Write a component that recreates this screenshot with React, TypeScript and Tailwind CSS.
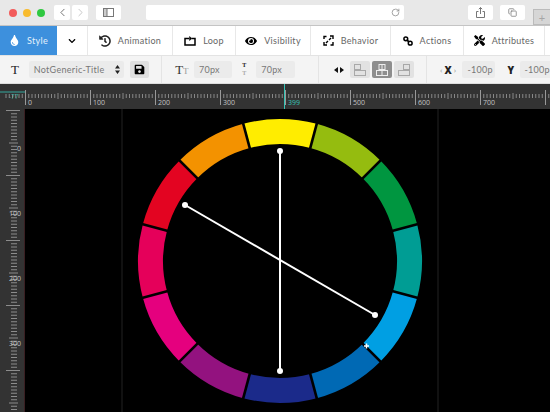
import React from "react";
import { ChevronLeft, ChevronRight, RotateCw, Copy } from "lucide-react";
import { FaTint, FaChevronDown, FaHistory, FaEye, FaTools, FaSave } from "react-icons/fa";

const colors = ["#ffed00","#95bc0f","#009640","#009d94","#009fe3","#0069b4","#1b2a8a","#93127f","#e5007e","#e5005a","#e30421","#f39200"];

function Wheel() {
  const cx = 255, cy = 152, R = 142, r = 117;
  const pt = (rad: number, deg: number) => {
    const a = (deg - 90) * Math.PI / 180;
    return [cx + rad * Math.cos(a), cy + rad * Math.sin(a)];
  };
  const p = (rad: number, deg: number) => pt(rad, deg).map((v) => v.toFixed(2)).join(" ");
  return (
    <svg width="525" height="303" viewBox="0 0 525 303" className="block">
      <line x1="97" y1="0" x2="97" y2="303" stroke="#222" />
      <line x1="413" y1="0" x2="413" y2="303" stroke="#222" />
      {colors.map((c, i) => {
        const a = i * 30 - 15, b = i * 30 + 15;
        return <path key={i} fill={c} d={`M${p(R, a)} A${R} ${R} 0 0 1 ${p(R, b)} L${p(r, b)} A${r} ${r} 0 0 0 ${p(r, a)} Z`} />;
      })}
      {colors.map((_, i) => {
        const a = i * 30 - 15;
        const [x1, y1] = pt(r - 2, a);
        const [x2, y2] = pt(R + 2, a);
        return <line key={i} x1={x1} y1={y1} x2={x2} y2={y2} stroke="#000" strokeWidth="2.6" />;
      })}
      <line x1="255" y1="42" x2="255" y2="262" stroke="#fff" strokeWidth="2" />
      <line x1="160" y1="96" x2="350" y2="206" stroke="#fff" strokeWidth="2" />
      <circle cx="255" cy="42" r="3" fill="#fff" />
      <circle cx="255" cy="262" r="3" fill="#fff" />
      <circle cx="160" cy="96" r="3" fill="#fff" />
      <circle cx="350" cy="206" r="3" fill="#fff" />
      <path d="M339 237h5M341.500 234.500v5" stroke="#fff" strokeWidth="1.500" />
    </svg>
  );
}

const rulerFont = "Open Sans, sans-serif";

function HRuler() {
  const ticks: React.ReactNode[] = [];
  for (let i = -6; i < 170; i++) {
    const x = 25.5 + i * 3.25;
    const major = i % 20 === 0;
    const mid = i % 10 === 0;
    ticks.push(<line key={i} x1={x} x2={x} y1={major ? 6 : mid ? 9 : 10} y2={major ? 21 : mid ? 15 : 14} stroke={major ? "#999" : "#888"} strokeWidth="1" />);
  }
  return (
    <svg width="550" height="25" className="block">
      {ticks}
      {[0, 100, 200, 300, 500, 600, 700].map((n) => (
        <text key={n} x={28 + n * 0.65} y="21" fill="#c4c4c4" fontSize="7" fontFamily={rulerFont}>{n}</text>
      ))}
      <text x="288" y="21" fill="#35c2b5" fontSize="7" fontFamily={rulerFont}>399</text>
      <text x="9" y="15" fill="#35a99e" fontSize="6.500" fontFamily={rulerFont}>-77</text>
      <line x1="0" x2="25" y1="8" y2="8" stroke="#35a99e" />
      <line x1="284.500" x2="284.500" y1="0" y2="25" stroke="#35c2b5" />
    </svg>
  );
}

function VRuler() {
  const ticks: React.ReactNode[] = [];
  for (let i = -1; i < 96; i++) {
    const y = 1.5 + i * 3.25;
    const major = i % 20 === 0;
    const mid = i % 20 === 10;
    ticks.push(<line key={i} x1={major ? 6 : mid ? 9 : 11} x2={major ? 20 : mid ? 18 : 17} y1={y} y2={y} stroke="#8c8c8c" />);
  }
  return (
    <svg width="25" height="303" className="block shrink-0 bg-[#333]">
      {ticks}
      {[0, 100, 200, 300].map((n) => (
        <text key={n} x="21" y={42 + n * 0.65} textAnchor="end" fill="#c8c8c8" fontSize="7" fontFamily={rulerFont}>{n}</text>
      ))}
      <line x1="24.500" x2="24.500" y1="0" y2="303" stroke="#3a1f22" />
    </svg>
  );
}

function LoopIcon() {
  return (
    <svg width="12" height="10" viewBox="0 0 12 10" fill="none" stroke="#000" strokeWidth="1.500">
      <path d="M5 2.500H1v6.500h10V2.500H8" />
      <path d="M5.500 0.500l2.500 2-2.500 2z" fill="#000" strokeWidth="0.500" />
    </svg>
  );
}

function BehaviorIcon() {
  return (
    <svg width="11" height="11" viewBox="0 0 11 11" fill="none" stroke="#000" strokeWidth="1.400">
      <path d="M1 4V1.500h2.500M7 1h3v3M10 7v3H7.500M4 10H1V7" />
      <path d="M3 8l2-2M8 3L6 5" />
    </svg>
  );
}

function ActionsIcon() {
  return (
    <svg width="10" height="10" viewBox="0 0 10 10" fill="none" stroke="#000" strokeWidth="1.500">
      <circle cx="2.800" cy="2.800" r="1.900" />
      <circle cx="7.200" cy="7.200" r="1.900" />
      <path d="M4.200 4.200l1.600 1.600" strokeWidth="1.800" />
    </svg>
  );
}

function Tab({ icon, label, w, active }: { icon?: React.ReactNode; label?: string; w: string; active?: boolean }) {
  return (
    <div className={`${w} h-full flex items-center justify-center gap-[7px] text-[9px] tracking-[0.3px] ${active ? "bg-[#3d90dd] text-[#e4f0fb]" : "text-[#666] border-r border-[#e8e8e8]"}`}>
      {icon}
      {label && <span>{label}</span>}
    </div>
  );
}

function Field({ w, children }: { w: string; children: React.ReactNode }) {
  return <div className={`${w} h-[17px] rounded-[2px] bg-[#ebebeb] flex items-center px-[5px] text-[9px] tracking-[0.3px] text-[#777]`}>{children}</div>;
}

function AlignIcon({ mode }: { mode: 0 | 1 | 2 }) {
  const stroke = mode === 1 ? "#eee" : "#a8a8a8";
  const axis = mode === 0 ? 1.5 : mode === 1 ? 7 : 12.5;
  const topX = mode === 0 ? 1.5 : mode === 1 ? 4 : 6.5;
  return (
    <svg width="14" height="14" viewBox="0 0 14 14" fill="none" stroke={stroke} strokeWidth="1">
      <line x1={axis} x2={axis} y1="1" y2="13" />
      <rect x={topX} y="1.500" width="6" height="5" />
      <rect x="1.500" y="7.500" width="11" height="5" />
    </svg>
  );
}

function Sep({ className }: { className: string }) {
  return <div className={`w-px h-full bg-[#e4e4e4] ${className}`} />;
}

export default function App() {
  return (
    <div className="w-[550px] h-[412px] overflow-hidden flex flex-col bg-black font-['Lato',sans-serif]">
      <div className="h-[26px] shrink-0 flex items-center bg-[#e8e8e8] border-b border-[#c4c4c4] pl-[9px]">
        <div className="flex gap-[6px]">
          <span className="w-[8px] h-[8px] rounded-full bg-[#f25b5a]" />
          <span className="w-[8px] h-[8px] rounded-full bg-[#f8bb2e]" />
          <span className="w-[8px] h-[8px] rounded-full bg-[#2fc840]" />
        </div>
        <div className="flex gap-[2px] ml-[9px]">
          <div className="w-[16px] h-[15px] rounded-[2px] bg-white flex items-center justify-center"><ChevronLeft size={13} strokeWidth={1.5} className="text-[#555]" /></div>
          <div className="w-[16px] h-[15px] rounded-[2px] bg-white flex items-center justify-center"><ChevronRight size={13} strokeWidth={1.5} className="text-[#bbb]" /></div>
        </div>
        <div className="ml-[8px] w-[25px] h-[15px] rounded-[2px] bg-white flex items-center justify-center">
          <svg width="11" height="9" viewBox="0 0 11 9" fill="none" stroke="#777"><rect x="0.500" y="0.500" width="10" height="8" /><rect x="0.500" y="0.500" width="3.500" height="8" fill="#ccc" /></svg>
        </div>
        <div className="ml-[25px] w-[258px] h-[15px] rounded-[2px] bg-white flex items-center justify-end pr-[4px]"><RotateCw size={9} className="text-[#888]" /></div>
        <div className="ml-[64px] w-[25px] h-[15px] rounded-[2px] bg-white flex items-center justify-center">
          <svg width="9" height="11" viewBox="0 0 9 11" fill="none" stroke="#777"><path d="M2.500 4.500H.5v6h8v-6h-2M4.500 7V.5M2.800 2.200L4.500.5l1.700 1.700" /></svg>
        </div>
        <div className="ml-[7px] w-[25px] h-[15px] rounded-[2px] bg-white flex items-center justify-center"><Copy size={9} className="text-[#777]" /></div>
        <div className="ml-[8px] self-end w-[17px] h-[16px] bg-[#d6d6d6] border border-[#bbb] border-r-0 flex items-center justify-center text-[11px] leading-none text-[#a5a5a5]">+</div>
      </div>
      <div className="h-[30px] shrink-0 flex items-center bg-white border-b border-[#e3e3e3]">
        <Tab w="w-[57px]" active icon={<FaTint size={11} color="#fff" />} label="Style" />
        <Tab w="w-[31px]" icon={<FaChevronDown size={8} color="#000" />} />
        <Tab w="w-[85px]" icon={<FaHistory size={12} color="#222" />} label="Animation" />
        <Tab w="w-[63px]" icon={<LoopIcon />} label="Loop" />
        <Tab w="w-[75px]" icon={<FaEye size={12} color="#000" />} label="Visibility" />
        <Tab w="w-[80px]" icon={<BehaviorIcon />} label="Behavior" />
        <Tab w="w-[73px]" icon={<ActionsIcon />} label="Actions" />
        <Tab w="w-[81px]" icon={<FaTools size={11} color="#000" />} label="Attributes" />
      </div>
      <div className="h-[28px] shrink-0 flex items-center bg-[#f4f4f4] border-b border-[#ddd] pl-[11px] text-[#222]">
        <span className="w-[18px] font-['Liberation_Serif',serif] text-[13px]">T</span>
        <div className="w-[97px] h-[17px] rounded-[2px] bg-[#ebebeb] flex items-center justify-between pl-[5px] pr-[4px] text-[9px] tracking-[0.3px] text-[#777]">
          <span>NotGeneric-Title</span>
          <svg width="5" height="9" viewBox="0 0 5 9" fill="#222"><path d="M2.500 0L5 3.500H0zM2.500 9L0 5.500h5z" /></svg>
        </div>
        <div className="ml-[6px] w-[19px] h-[17px] rounded-[2px] bg-[#e0e0e0] flex items-center justify-center"><FaSave size={11} color="#000" /></div>
        <Sep className="ml-[12px]" />
        <div className="ml-[13px] w-[18px] flex items-baseline font-['Liberation_Serif',serif] text-[13px] text-[#333]">T<span className="text-[9px] text-[#999]">T</span></div>
        <Field w="ml-[1px] w-[39px]">70px</Field>
        <span className="w-[24px] flex flex-col items-center gap-[1px] font-['Liberation_Serif',serif] text-[6px] font-bold leading-[7px]"><span>T</span><span className="text-[#aaa]">T</span></span>
        <Field w="w-[39px]">70px</Field>
        <Sep className="ml-[23px]" />
        <div className="ml-[15px] flex items-center gap-[1px]">
          <svg width="10" height="6" viewBox="0 0 10 6" fill="#111"><path d="M0 3l4-3v6zM10 3L6 0v6z" /></svg>
        </div>
        <div className="ml-[6px] flex gap-[2px]">
          <div className="w-[20px] h-[17px] rounded-[2px] bg-[#e2e2e2] flex items-center justify-center"><AlignIcon mode={0} /></div>
          <div className="w-[20px] h-[17px] rounded-[2px] bg-[#8e8e8e] flex items-center justify-center"><AlignIcon mode={1} /></div>
          <div className="w-[20px] h-[17px] rounded-[2px] bg-[#e2e2e2] flex items-center justify-center"><AlignIcon mode={2} /></div>
        </div>
        <Sep className="ml-[12px]" />
        <span className="ml-[13px] w-[17px] flex items-center justify-center gap-[2px] text-[10px] font-black font-['Open_Sans',sans-serif] leading-none"><span className="text-[#999] font-normal text-[8px]">‹</span>X<span className="text-[#999] font-normal text-[8px]">›</span></span>
        <Field w="ml-[6px] w-[33px]">-100p</Field>
        <span className="ml-[12px] w-[6px] text-center text-[10px] font-black font-['Open_Sans',sans-serif] leading-none">Y</span>
        <div className="ml-[7px] flex-1 h-[17px] rounded-l-[2px] bg-[#ebebeb] flex items-center pl-[4px] text-[9px] tracking-[0.3px] text-[#777] whitespace-nowrap">-100p</div>
      </div>
      <div className="h-[25px] shrink-0 bg-[#333]"><HRuler /></div>
      <div className="flex-1 flex min-h-0">
        <VRuler />
        <div className="flex-1 bg-black"><Wheel /></div>
      </div>
    </div>
  );
}
